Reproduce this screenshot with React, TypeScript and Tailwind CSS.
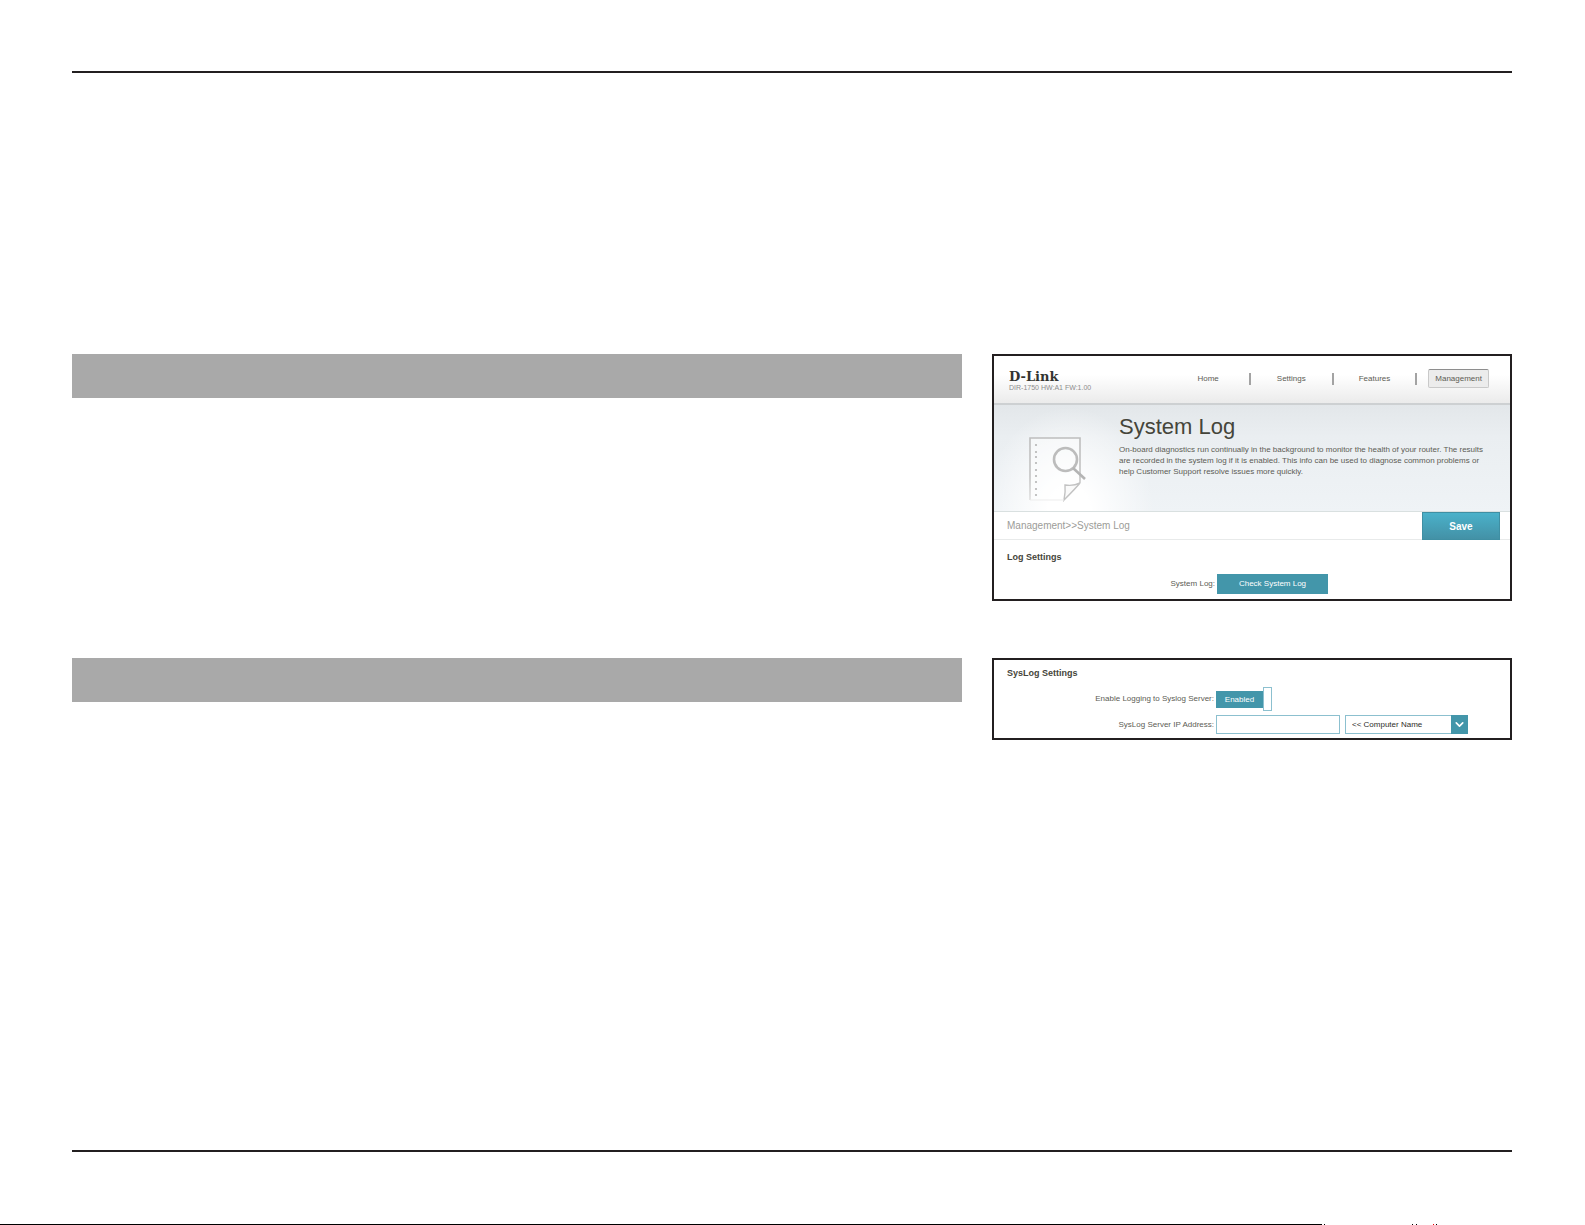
import type { ReactNode } from "react";
import { ChevronDown } from "lucide-react";

const holes = [8, 15, 20, 26, 33, 39, 45, 52, 58];

function LogIcon() {
  return (
    <svg width="58" height="66" viewBox="0 0 58 66" fill="none" aria-hidden="true">
      <defs>
        <linearGradient id="paper" x1="0" y1="0" x2="0" y2="66" gradientUnits="userSpaceOnUse">
          <stop offset="0" stopColor="#bdbdbd" />
          <stop offset="0.6" stopColor="#c4c4c4" />
          <stop offset="1" stopColor="#e4e4e4" />
        </linearGradient>
      </defs>
      <path d="M1 63V1H51V46L35 63Z" fill="#fff" fillOpacity="0.4" />
      <path d="M1 63V1H51V46" stroke="url(#paper)" strokeWidth="1.6" />
      <path d="M51 46C47 51 41 57 35 63C36 58 36.5 53 36 48C42 49 47 48 51 46Z" fill="#fafafa" stroke="#c2c2c2" strokeWidth="1.4" />
      <path d="M1 63H35" stroke="#ededed" />
      {holes.map((y) => (
        <circle key={y} cx="7" cy={y} r="1.1" fill="#b5b5b5" />
      ))}
      <circle cx="36.5" cy="22.5" r="11.5" stroke="#bcbcbc" strokeWidth="2.6" />
      <path d="M44 31L56 42" stroke="#b4b4b4" strokeWidth="2.6" />
    </svg>
  );
}

function Separator() {
  return <span className="h-3 w-0.5 bg-[#a3a3a3]" />;
}

function Section({ children }: { children: ReactNode }) {
  return (
    <section className="grid grid-cols-[89fr_52fr] items-start gap-[30px]">
      <div className="h-11 bg-[#a9a9a9]" />
      <div className="border-2 border-[#231f20] bg-white">{children}</div>
    </section>
  );
}

export default function App() {
  return (
    <div className="flex min-h-screen flex-col bg-white font-['Liberation_Sans',Arial,sans-serif] text-[8px] text-[#5c5c54]">
      <main className="mt-[71px] mr-[73px] mb-[72px] ml-[72px] flex grow flex-col gap-[57px] border-y-2 border-[#231f20] pt-[281px]">
        <Section>
          <header className="flex h-[49px] items-start justify-between border-b-2 border-[#cdd0d2] bg-linear-to-b from-white from-40% to-[#ebebeb] pr-[21px] pl-[15px]">
            <div className="mt-[14px]">
              <div className="flex items-start font-['DejaVu_Serif',serif] text-[13px] leading-[14px] font-black text-[#333330]">
                D-Link
              </div>
              <div className="text-[7px] leading-2 text-[#8d8d8d]">DIR-1750 HW:A1 FW:1.00</div>
            </div>
            <nav className="mt-[13px] flex h-[19px] items-center">
              <a href="#home" className="mr-[30px]">Home</a>
              <Separator />
              <a href="#settings" className="mx-[26px]">Settings</a>
              <Separator />
              <a href="#features" className="mx-[25px]">Features</a>
              <Separator />
              <a
                href="#management"
                className="ml-[11px] rounded-xs border border-[#c9c9c9] border-t-[#8e8e8e] bg-[#ececec] px-[6px] leading-[17px]"
              >
                Management
              </a>
            </nav>
          </header>

          <div className="flex h-[107px] border-b border-[#d9e0e0] bg-[radial-gradient(ellipse_85px_105px_at_75px_107px,white_25%,transparent),linear-gradient(#e3e7ea,#eaeef1_30%,#eff3f6)] pl-[35px]">
            <div className="mt-8 mr-8 shrink-0">
              <LogIcon />
            </div>
            <div className="mt-[10px]">
              <h1 className="text-[22px] leading-6 text-[#45453a]">System Log</h1>
              <p className="mt-[5px] leading-[11px]">
                On-board diagnostics run continually in the background to monitor the health of your router. The results
                <br />
                are recorded in the system log if it is enabled. This info can be used to diagnose common problems or
                <br />
                help Customer Support resolve issues more quickly.
              </p>
            </div>
          </div>

          <div className="flex h-7 items-center justify-between border-b border-[#e8eaea] pr-[10px] pl-[13px]">
            <span className="text-[10px] text-[#9c9c98]">Management&gt;&gt;System Log</span>
            <button className="-mb-px h-7 w-[78px] border border-[#3f8fa3] bg-linear-to-b from-[#4ab1ca] to-[#4391a6] text-[10px] font-bold text-white">
              Save
            </button>
          </div>

          <div className="px-[13px] pt-[11px] pb-[5px]">
            <h2 className="text-[9px] leading-3 font-bold text-[#45453a]">Log Settings</h2>
            <div className="mt-[11px] flex items-center">
              <span className="mr-0.5 w-[208px] text-right">System Log:</span>
              <button className="h-5 w-[111px] bg-[#4396aa] text-white">Check System Log</button>
            </div>
          </div>
        </Section>

        <Section>
          <div className="px-[13px] pt-[7px] pb-1">
            <h2 className="text-[9px] leading-3 font-bold text-[#45453a]">SysLog Settings</h2>
            <div className="mt-2 flex h-6 items-center">
              <label htmlFor="syslog" className="mr-0.5 w-[207px] text-right">
                Enable Logging to Syslog Server:
              </label>
              <label className="flex items-center">
                <input id="syslog" type="checkbox" defaultChecked className="peer sr-only" />
                <span className="h-[17px] w-[47px] bg-[#4396aa] text-center leading-[17px] text-white">Enabled</span>
                <span className="h-6 w-[9px] border border-[#8cc0cf] bg-white" />
              </label>
            </div>
            <div className="mt-1 flex items-center">
              <label htmlFor="ip" className="mr-0.5 w-[207px] text-right">
                SysLog Server IP Address:
              </label>
              <input id="ip" type="text" className="h-[19px] w-[124px] border border-[#8cc0cf] bg-white px-1" />
              <div className="relative ml-[5px]">
                <select
                  aria-label="Computer name"
                  className="h-[19px] w-[123px] appearance-none border border-[#8cc0cf] bg-white pl-[6px] text-[#2e2e2a]"
                >
                  <option>&lt;&lt; Computer Name</option>
                </select>
                <span className="pointer-events-none absolute inset-y-0 right-0 flex w-[17px] items-center justify-center bg-[#4396aa] text-white">
                  <ChevronDown size={13} strokeWidth={3} />
                </span>
              </div>
            </div>
          </div>
        </Section>
      </main>

      {/* top edge of the next sheet */}
      <div className="flex h-px">
        <span className="w-[1322px] bg-black" />
        <span className="ml-0.5 w-px bg-black" />
        <span className="ml-[87px] w-px bg-black" />
        <span className="ml-[3px] w-px bg-black" />
        <span className="ml-4 w-px bg-[#ee0000]" />
        <span className="ml-0.5 w-px bg-black" />
      </div>
    </div>
  );
}
